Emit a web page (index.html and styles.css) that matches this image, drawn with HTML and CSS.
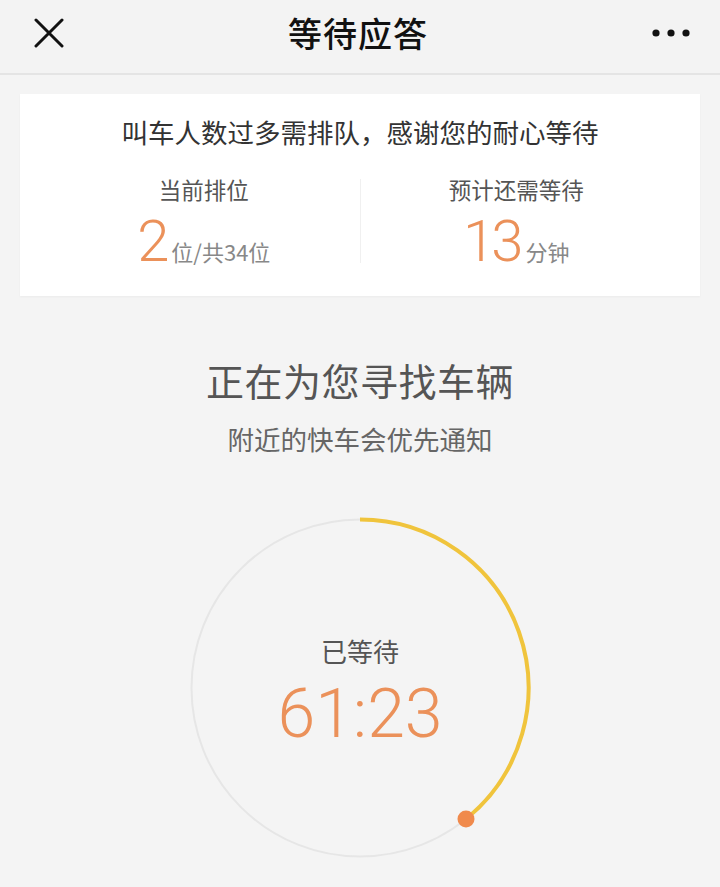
FILE: index.html
```html
<!DOCTYPE html>
<html lang="zh-CN">
<head>
  <meta charset="UTF-8" />
  <title>等待应答</title>
  <link rel="stylesheet" href="styles.css">
</head>
<body>

  <header class="nav-bar">
    <svg class="nav-close" width="30" height="30" viewBox="0 0 30 30">
      <path d="M2 2 L28 28 M28 2 L2 28" stroke="#111" stroke-width="3" stroke-linecap="round" fill="none" />
    </svg>
    <h1 class="nav-title">等待应答</h1>
    <svg class="nav-more" width="38" height="10" viewBox="0 0 38 10">
      <circle cx="4" cy="5" r="3.6" fill="#111" />
      <circle cx="19" cy="5" r="3.6" fill="#111" />
      <circle cx="34" cy="5" r="3.6" fill="#111" />
    </svg>
  </header>

  <section class="queue-card">
    <p class="queue-notice">叫车人数过多需排队，感谢您的耐心等待</p>
    <div class="queue-stats">
      <div class="stat">
        <div class="stat-label">当前排位</div>
        <div class="stat-value"><span class="stat-num">2</span><span class="stat-unit">位/共34位</span></div>
      </div>
      <div class="stat-divider"></div>
      <div class="stat">
        <div class="stat-label">预计还需等待</div>
        <div class="stat-value"><span class="stat-num">13</span><span class="stat-unit">分钟</span></div>
      </div>
    </div>
  </section>

  <section class="searching">
    <h2 class="searching-title">正在为您寻找车辆</h2>
    <p class="searching-sub">附近的快车会优先通知</p>
  </section>

  <div class="timer">
    <svg class="timer-ring" width="344" height="344" viewBox="0 0 344 344">
      <circle cx="172" cy="172" r="168.5" fill="none" stroke="#e6e6e6" stroke-width="2" />
      <path d="M172 3.5 A168.5 168.5 0 0 1 278 303" fill="none" stroke="#f0c43c" stroke-width="4" />
      <circle cx="278" cy="303" r="8.5" fill="#f08a4c" />
    </svg>
    <div class="timer-text">
      <div class="timer-label">已等待</div>
      <div class="timer-value">61:23</div>
    </div>
  </div>

</body>
</html>
```

FILE: styles.css
```css
body {
  margin: 0;
  background: #f4f4f4;
  font-family: "Noto Sans CJK SC", "Noto Sans", sans-serif;
  color: #333;
  width: 720px;
  height: 887px;
  overflow: hidden;
}

.nav-bar {
  height: 75px;
  background: #f3f3f3;
  border-bottom: 2px solid #e4e4e4;
  display: flex;
  align-items: center;
  justify-content: space-between;
  padding: 0 30px 0 34px;
  box-sizing: border-box;
}

.nav-close {
  margin-top: -8px;
}

.nav-more {
  margin-top: -8px;
}

.nav-title {
  margin: 0 0 8px;
  font-size: 34px;
  font-weight: 500;
  color: #111;
  letter-spacing: 1px;
}

.queue-card {
  margin: 19px 20px 0;
  background: #fff;
  padding: 19px 28px 27px;
  box-shadow: 0 1px 2px rgba(0,0,0,0.04);
}

.queue-notice {
  margin: 0;
  text-align: center;
  font-size: 26.5px;
  line-height: 38px;
  color: #333;
}

.queue-stats {
  display: flex;
  align-items: stretch;
  margin-top: 22px;
}

.stat {
  flex: 1;
  display: flex;
  flex-direction: column;
  align-items: center;
}

.stat-label {
  font-size: 22.5px;
  line-height: 32px;
  color: #555;
}

.stat-value {
  display: flex;
  align-items: baseline;
  margin-top: 8px;
  height: 56px;
}

.stat-num {
  font-family: Roboto, "Noto Sans", sans-serif;
  font-weight: 300;
  font-size: 58px;
  line-height: 56px;
  color: #eb915a;
  letter-spacing: -4px;
  margin-right: 6px;
}

.stat-unit {
  font-size: 22px;
  color: #888;
}

.stat-divider {
  width: 1px;
  background: #f0f0f0;
  margin: 6px 0 6px;
}

.searching {
  text-align: center;
  margin-top: 58px;
}

.searching-title {
  margin: 0;
  font-size: 38px;
  line-height: 52px;
  font-weight: 400;
  color: #555;
  letter-spacing: 0.5px;
}

.searching-sub {
  margin: 14px 0 0;
  font-size: 26.5px;
  line-height: 38px;
  color: #666;
}

.timer {
  display: grid;
  justify-content: center;
  margin-top: 58px;
}

.timer-ring,
.timer-text {
  grid-area: 1 / 1;
}

.timer-text {
  display: flex;
  flex-direction: column;
  align-items: center;
  padding-top: 117px;
}

.timer-label {
  font-size: 26px;
  line-height: 36px;
  color: #555;
}

.timer-value {
  font-family: Roboto, "Noto Sans", sans-serif;
  font-weight: 300;
  font-size: 68px;
  line-height: 76px;
  color: #eb915a;
  margin-top: 7px;
}
```
